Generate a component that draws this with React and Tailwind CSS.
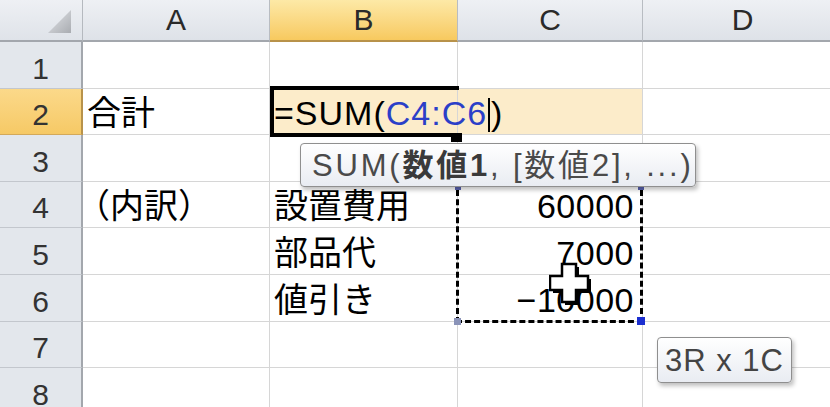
import React from "react";

const FONT = { fontFamily: '"Liberation Sans", "Noto Sans CJK JP", sans-serif' };
const CJK = { fontFamily: '"Liberation Sans", "Noto Sans CJK JP", sans-serif' };

const cols = ["A", "B", "C", "D"];

const content = {
  "A2": { t: "合計" },
  "A4": { t: "（内訳）", shift: true },
  "B4": { t: "設置費用" },
  "B5": { t: "部品代" },
  "B6": { t: "値引き" },
  "C4": { t: "60000", r: true },
  "C5": { t: "7000", r: true },
  "C6": { t: "\u221210000", r: true },
};

function Cell({ col, row }) {
  const key = col + row;
  const c = content[key];
  const editRow = row === 2 && (col === "B" || col === "C");
  return (
    <div
      className={
        "flex items-end border-r border-b border-[#d6d6d6] pb-[4px] text-[34px] leading-none text-black overflow-visible whitespace-nowrap " +
        (editRow ? "bg-[#fcecca] " : "bg-white ") +
        (key === "B2" ? "relative z-10 " : "") +
        (c && c.r ? "justify-end pr-[8px] " : "pl-[4px] ")
      }
      style={CJK}
    >
      {key === "B2" ? (
        <span className="flex items-end tracking-[1px]" style={FONT}>
          <span>=SUM(</span>
          <span className="text-[#2b3fc8]">C4:C6</span>
          <span className="inline-block w-[2px] h-[34px] bg-black mx-[1px] mb-[-2px]"></span>
          <span>)</span>
        </span>
      ) : c ? (
        <span className={(c.r ? "tracking-[0.5px]" : "") + (c.shift ? " ml-[-11px]" : "")}>{c.t}</span>
      ) : null}
    </div>
  );
}

export default function App() {
  const rows = [1, 2, 3, 4, 5, 6, 7, 8];
  return (
    <div className="w-[830px] h-[407px] overflow-hidden bg-white relative" style={FONT}>
      <div className="grid grid-cols-[83px_187px_188px_185px_200px] grid-rows-[42px_repeat(8,46.6px)]">
        {/* corner */}
        <div className="relative bg-gradient-to-b from-[#eef0f4] to-[#dfe3e9] border-r border-r-[#b5b9bf] border-b-2 border-b-[#a3a7ad] flex items-start justify-end pr-[11px] pt-[10px]">
          <svg width="23" height="23" viewBox="0 0 23 23">
            <defs>
              <linearGradient id="tri" x1="0" y1="0" x2="1" y2="1">
                <stop offset="0" stopColor="#e4e6ea" />
                <stop offset="1" stopColor="#a9acb1" />
              </linearGradient>
            </defs>
            <polygon points="23,0 23,23 0,23" fill="url(#tri)" />
          </svg>
        </div>
        {cols.map((c) => (
          <div
            key={c}
            className={
              "flex items-center justify-center text-[30px] leading-none text-[#2a2a2a] border-r border-r-[#b8bcc2] border-b-2 " +
              (c === "B"
                ? "bg-gradient-to-b from-[#fde9a6] to-[#f7c95e] border-b-[#b8924a]"
                : "bg-gradient-to-b from-[#eef0f4] to-[#dee2e8] border-b-[#a3a7ad]")
            }
          >
            {c}
          </div>
        ))}
        {rows.map((r) => (
          <React.Fragment key={r}>
            <div
              className={
                "flex items-end justify-center pb-[4px] text-[30px] leading-none text-[#333] border-r-2 border-b " +
                (r === 2
                  ? "bg-gradient-to-b from-[#fbd98a] to-[#f6c965] border-r-[#b8924a] border-b-[#d3a95a]"
                  : "bg-[#e3e7ec] border-r-[#a3a7ad] border-b-[#c3c7cd]")
              }
            >
              {r}
            </div>
            {cols.map((c) => (
              <Cell key={c + r} col={c} row={r} />
            ))}
          </React.Fragment>
        ))}
      </div>

      {/* active cell border */}
      <div className="absolute left-[270px] top-[86px] w-[189px] h-[51px] border-t-4 border-l-4 border-b-4 border-black z-20"></div>
      <div className="absolute left-[451px] top-[133px] w-[11px] h-[9px] bg-black z-20"></div>

      {/* marching ants selection */}
      <div className="absolute left-[456px] top-[181px] w-[187px] h-[142px] border-[3px] border-dashed border-black bg-transparent z-20"></div>
      <div className="absolute left-[454px] top-[318px] w-[7px] h-[7px] bg-[#8a93b8] z-20"></div>
      <div className="absolute left-[637px] top-[317px] w-[8px] h-[8px] bg-[#1c2fd0] z-20"></div>
      <div className="absolute left-[455px] top-[184px] w-[6px] h-[6px] bg-[#5a63b0] z-20"></div>
      <div className="absolute left-[638px] top-[184px] w-[6px] h-[6px] bg-[#5a63b0] z-20"></div>

      {/* function tooltip */}
      <div className="absolute left-[300px] top-[143px] w-[396px] h-[44px] rounded-[4px] border border-[#8f8f8f] bg-gradient-to-b from-[#ffffff] to-[#e9ecf2] shadow-[2px_3px_4px_rgba(0,0,0,0.25)] flex items-center pl-[11px] text-[31px] tracking-[2.8px] leading-none text-[#4a4a4a] whitespace-nowrap z-30" style={CJK}>
        <span>SUM(</span>
        <span className="font-bold text-[#3a3a3a]">数値1</span>
        <span>, [数値2], ...)</span>
      </div>

      {/* size tooltip */}
      <div className="absolute left-[657px] top-[337px] w-[135px] h-[46px] rounded-[4px] border border-[#8f8f8f] bg-gradient-to-b from-[#ffffff] to-[#e9ecf2] shadow-[2px_3px_4px_rgba(0,0,0,0.25)] flex items-center justify-center text-[31px] tracking-[1px] leading-none text-[#444] whitespace-nowrap z-30">
        3R x 1C
      </div>

      {/* cell cursor */}
      <svg className="absolute left-[549px] top-[262px] z-30" width="46" height="46" viewBox="0 0 46 46">
        <path d="M16 5 H30 V17 H42 V31 H30 V43 H16 V31 H4 V17 H16 Z" fill="#000" />
        <path d="M13 2 H27 V14 H39 V28 H27 V40 H13 V28 H1 V14 H13 Z" fill="#fff" stroke="#000" strokeWidth="2.5" />
      </svg>
    </div>
  );
}
